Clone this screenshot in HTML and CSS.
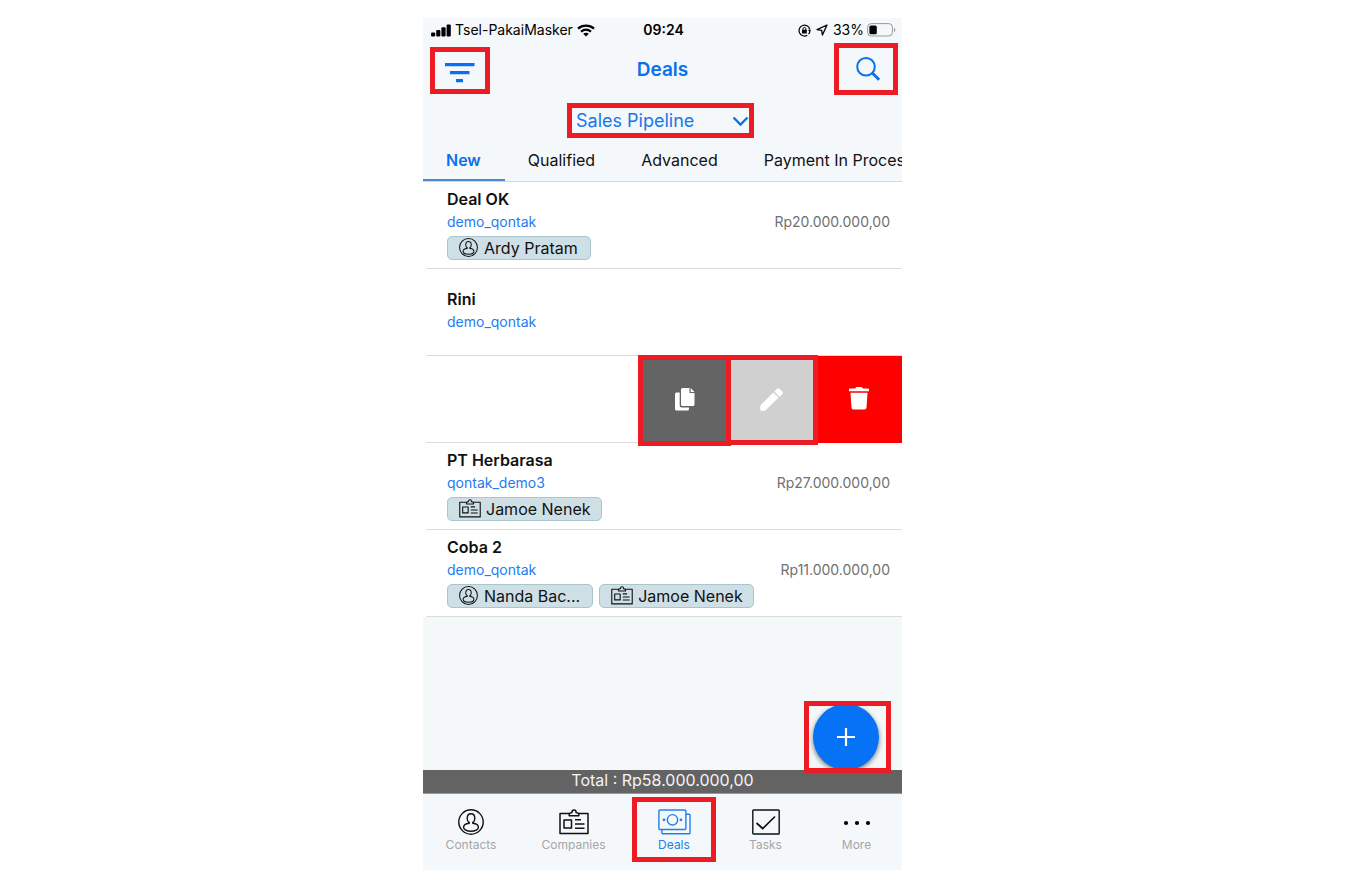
FILE: index.html
```html
<!DOCTYPE html>
<html lang="en">
<head>
<meta charset="utf-8">
<meta name="viewport" content="width=device-width, initial-scale=1">
<title>Deals</title>
<link rel="stylesheet" href="styles.css">
</head>
<body>
<svg class="defs" aria-hidden="true">
  <symbol id="person" viewBox="0 0 26 26"><g fill="none" stroke="currentColor" stroke-width="1.4"><circle cx="13" cy="13" r="12.2"/><path d="M11.200 13.600C9.900 12.800 9.200 11.300 9.200 9.400c0-2.700 1.500-4.700 3.800-4.700s3.800 2 3.800 4.700c0 1.900-.7 3.400-2 4.200"/><path d="M11.200 12.800v1.400c-3.400.4-5.600 2-5.600 4 0 2.300 3.200 4.100 7.400 4.100s7.400-1.800 7.400-4.100c0-2-2.200-3.600-5.600-4v-1.400"/></g></symbol>
  <symbol id="badge" viewBox="0 0 30 26"><g fill="none" stroke="currentColor" stroke-width="1.5" stroke-linejoin="round"><path d="M10 4.500H1V24.500h28V4.500h-9"/><path d="M10.200 6.800V4.500l2.600-.9c.1-1.500.9-2.600 2.200-2.600s2.100 1.100 2.200 2.600l2.600.9v2.300z"/><rect x="5" y="11" width="7.500" height="8"/><path d="M16 10.800h6M16 15h9.500M16 19.200h9.500"/></g></symbol>
</svg>
<div class="phone">
  <div class="status">
    <div class="status-side">
      <svg width="20" height="13" viewBox="0 0 20 13"><rect x="0" y="8.500" width="4.200" height="4" rx="1"/><rect x="5.200" y="6" width="4.200" height="6.500" rx="1"/><rect x="10.400" y="3.200" width="4.200" height="9.300" rx="1"/><rect x="15.600" y=".5" width="4.200" height="12" rx="1"/></svg>
      <span class="carrier">Tsel-PakaiMasker</span>
      <svg width="18" height="13" viewBox="0 0 18 13"><path d="M1 4.600C5.500.6 12.500.6 17 4.600M4 7.700c3-2.500 7-2.500 10 0" fill="none" stroke="#000" stroke-width="2.200"/><path d="M9 12.600 6.200 9.800c1.600-1.400 4-1.400 5.600 0z"/></svg>
    </div>
    <time class="clock">09:24</time>
    <div class="status-side status-right">
      <svg width="13" height="13" viewBox="0 0 13 13"><path d="M9.300 11.200A5.400 5.400 0 1 1 11.700 5.300M12 6.500a5.400 5.400 0 0 1-1.500 3.700" fill="none" stroke="#000" stroke-width="1.200"/><path d="M10 5.700h3l-1.500 2.200z"/><rect x="4" y="5.800" width="4.800" height="3.700" rx=".5"/><path d="M5 6V4.800a1.400 1.400 0 0 1 2.800 0V6" fill="none" stroke="#000"/></svg>
      <svg class="location" width="12" height="12" viewBox="0 0 12 12"><path d="M11 1 1 5.600l4.700.7.700 4.700z" fill="none" stroke="#000" stroke-width="1.300" stroke-linejoin="round"/></svg>
      <span>33%</span>
      <svg width="29" height="14" viewBox="0 0 29 14"><rect x=".6" y=".6" width="24.800" height="12.400" rx="3.600" fill="none" stroke="#999"/><rect x="2.400" y="2.400" width="7.400" height="8.800" rx="1.500"/><path d="M27 4.700q1.400.7 1.400 2.200T27 9.100z" fill="#999"/></svg>
    </div>
  </div>

  <header class="header">
    <button class="filter marked" aria-label="Filter"><svg width="30" height="20" viewBox="0 0 30 20"><path d="M0 1.700h29.500M5 9.700h19.500M11 17.700h7" stroke="currentColor" stroke-width="3.200"/></svg></button>
    <h1 class="title">Deals</h1>
    <button class="search marked" aria-label="Search"><svg width="26" height="26" viewBox="0 0 26 26" fill="none" stroke="currentColor"><circle cx="11" cy="10.800" r="8.800" stroke-width="2"/><path d="m17.500 17.300 6.700 6.500" stroke-width="2.900"/></svg></button>
  </header>

  <div class="pipeline">
    <div class="picker marked">
      <select class="picker-select" aria-label="Pipeline"><option>Sales Pipeline</option></select>
      <svg class="picker-arrow" width="17" height="11" viewBox="0 0 17 11"><path d="m1.500 1.500 7 7 7-7" fill="none" stroke="currentColor" stroke-width="2.400"/></svg>
    </div>
  </div>

  <nav class="stages" aria-label="Stages">
    <a class="stage stage-on" href="#new">New</a>
    <a class="stage" href="#qualified">Qualified</a>
    <a class="stage" href="#advanced">Advanced</a>
    <a class="stage" href="#payment">Payment In Process</a>
  </nav>

  <ul class="deals">
    <li class="deal">
      <h2 class="name">Deal OK</h2>
      <div class="info"><a class="owner" href="#owner">demo_qontak</a><span>Rp20.000.000,00</span></div>
      <div class="chips"><span class="chip"><svg width="19" height="19"><use href="#person"/></svg>Ardy Pratam</span></div>
    </li>
    <li class="deal">
      <h2 class="name">Rini</h2>
      <div class="info"><a class="owner" href="#owner">demo_qontak</a></div>
    </li>
    <li class="deal swiped">
      <button class="action copy marked" aria-label="Duplicate"><svg width="20" height="23" viewBox="0 0 20 23" fill="#fff"><path d="M7.500 0h7v5h5v11.500q0 1.500-1.500 1.500H7.500Q6 18 6 16.500v-15Q6 0 7.500 0zM15.700 0 19.500 3.900h-3.800z"/><path d="M4.700 4.500v13q0 2 2 2h7.300v1.500q0 1.500-1.500 1.500h-11Q0 22.500 0 21V6q0-1.500 1.500-1.500z"/></svg></button>
      <button class="action edit marked" aria-label="Edit"><svg width="23" height="23" viewBox="0 0 23 23" fill="#fff"><path d="m13.300 4.400 5.300 5.200L6.500 21.600Q5.500 22.800 4 22.800H1.200Q.2 22.800.2 21.800V19q0-1.500 1-2.500z"/><path d="m14.300 3.400 2.500-2.500q1.400-1.300 2.800 0l2.600 2.600q1.300 1.400 0 2.800l-2.500 2.400z"/></svg></button>
      <button class="action delete" aria-label="Delete"><svg width="20" height="23" viewBox="0 0 20 23" fill="#fff"><path d="M.8 1.500h5.400L7.300 0h5.400l1.100 1.500h5.400q.8 0 .8.800v2H0v-2q0-.8.800-.8zM1.500 5.800h17l-1 15q-.2 1.700-1.800 1.700H4.300q-1.600 0-1.800-1.700z"/></svg></button>
    </li>
    <li class="deal">
      <h2 class="name">PT Herbarasa</h2>
      <div class="info"><a class="owner" href="#owner">qontak_demo3</a><span>Rp27.000.000,00</span></div>
      <div class="chips"><span class="chip chip-company"><svg width="22" height="19"><use href="#badge"/></svg>Jamoe Nenek</span></div>
    </li>
    <li class="deal">
      <h2 class="name">Coba 2</h2>
      <div class="info"><a class="owner" href="#owner">demo_qontak</a><span>Rp11.000.000,00</span></div>
      <div class="chips"><span class="chip"><svg width="19" height="19"><use href="#person"/></svg>Nanda Bac...</span><span class="chip chip-company"><svg width="22" height="19"><use href="#badge"/></svg>Jamoe Nenek</span></div>
    </li>
  </ul>

  <div class="rest">
    <button class="add marked" aria-label="Add deal"><span class="add-disc"><svg width="18" height="18" viewBox="0 0 18 18"><path d="M9 0v18M0 9h18" stroke="#fff" stroke-width="2.200"/></svg></span></button>
  </div>
  <div class="total">Total : Rp58.000.000,00</div>

  <nav class="tabbar" aria-label="Main">
    <a class="tab" href="#contacts"><svg width="26" height="26"><use href="#person"/></svg><span>Contacts</span></a>
    <a class="tab" href="#companies"><svg width="30" height="26"><use href="#badge"/></svg><span>Companies</span></a>
    <a class="tab tab-on marked" href="#deals"><svg width="33" height="26" viewBox="0 0 33 26" fill="none" stroke="currentColor" stroke-width="1.400"><rect x=".9" y="1" width="27" height="19.500" rx="1"/><path d="M28 5.200h3.200q.8 0 .8.800v18q0 .8-.8.800H4.700q-.8 0-.8-.8v-3.300"/><circle cx="14.500" cy="10.800" r="5.200"/><circle cx="6" cy="10.800" r=".7" fill="currentColor"/><circle cx="23" cy="10.800" r=".7" fill="currentColor"/></svg><span>Deals</span></a>
    <a class="tab" href="#tasks"><svg width="28" height="26" viewBox="0 0 28 26" fill="none" stroke="currentColor"><rect x=".8" y="1" width="26.400" height="24" rx=".8" stroke-width="1.400"/><path d="m4.500 14 6.200 5.500L23 7.500" stroke-width="1.700"/></svg><span>Tasks</span></a>
    <a class="tab" href="#more"><svg width="28" height="26" viewBox="0 0 28 26"><circle cx="3" cy="14" r="2.100"/><circle cx="14" cy="14" r="2.100"/><circle cx="25" cy="14" r="2.100"/></svg><span>More</span></a>
  </nav>
</div>
</body>
</html>
```
FILE: styles.css
```css
* { box-sizing: border-box; }

body {
  display: flex;
  flex-direction: column;
  align-items: center;
  min-height: 100vh;
  margin: 0;
  padding: 18px 35px 19px 0;
  background: #fff;
  color: #111;
  font: 16px/20px Inter, "Liberation Sans", sans-serif;
}

h1, h2, ul { margin: 0; padding: 0; }
a { text-decoration: none; }
svg { flex: none; }
button, select { padding: 0; border: 0; background: none; color: inherit; font: inherit; }
button { display: flex; align-items: center; justify-content: center; cursor: pointer; }

.defs { position: absolute; width: 0; height: 0; }

.phone {
  display: flex;
  flex-direction: column;
  flex: 1;
  width: 100%;
  max-width: 479px;
  background: #f4f8fb;
}

/* Callout frame around highlighted controls */
.marked { border: 5px solid #ed1c24; }

.status {
  display: grid;
  grid-template-columns: 1fr auto 1fr;
  align-items: center;
  padding: 2px 6px 3px 8px;
  color: #000;
  font-size: 14px;
}
.status-side { display: flex; align-items: center; gap: 4px; }
.status-right { gap: 3px; justify-content: flex-end; }
.location { margin: 0 2px; }
.clock { font-weight: 600; }

.header {
  display: grid;
  grid-template-columns: 1fr auto 1fr;
  align-items: end;
  padding: 0 4px 0 4px;
  color: #0a70ee;
}
.filter { width: 60px; height: 47px; margin: 0 0 1px 3px; padding-top: 4px; }
.search { width: 64px; height: 52px; padding-left: 4px; justify-self: end; }
.title { align-self: center; padding-top: 1px; font-size: 19px; font-weight: 600; }

.pipeline { display: flex; justify-content: center; padding: 8px 4px 0 0; }
.picker { position: relative; width: 187px; height: 35px; color: #1a76e8; }
.picker-select { width: 100%; height: 26px; padding-left: 4px; appearance: none; font-size: 18px; line-height: 26px; }
.picker-arrow { position: absolute; top: 8px; right: 0; pointer-events: none; color: #0a70ee; }

.stages { display: flex; overflow: hidden; border-bottom: 1px solid #cfd8de; }
.stage { flex: none; padding: 12px 23px 9px; border-bottom: 2px solid transparent; color: #111; white-space: nowrap; }
.stage-on { padding-right: 24px; border-color: #4c87d4; color: #0a70ee; font-weight: 600; }

.deals { background: #fff; list-style: none; }
.deal {
  display: flex;
  flex-direction: column;
  justify-content: center;
  min-height: 87px;
  margin-left: 3px;
  padding: 0 12px 4px 21px;
  border-bottom: 1px solid #dcdcde;
}
.name { font-size: 16px; line-height: 24px; font-weight: 600; }
.info { display: flex; justify-content: space-between; line-height: 22px; color: #707070; font-size: 14px; }
.owner { color: #1f7cf0; }
.chips { display: flex; gap: 6px; padding-top: 3px; }
.chip {
  display: flex;
  align-items: center;
  gap: 6px;
  height: 24px;
  padding: 0 12px 0 11px;
  border: 1px solid #a9c6cd;
  border-radius: 5px;
  background: #cfdfe6;
}
.chip-company { gap: 5px; padding-right: 10px; }

.swiped { flex-direction: row; justify-content: flex-end; padding: 0; }
.action { position: relative; }
.copy { width: 93px; margin: -1px -5px -4px 0; padding-bottom: 2px; background: #646464; }
.edit { width: 92px; margin: -1px 0 -3px; padding: 0 2px 2px 0; background: #d0d0d0; }
.delete { width: 84px; margin-bottom: -1px; padding: 0 3px 2px 0; background: #f00; }

.rest { position: relative; flex: 1; min-height: 90px; background: #f4f8f8; }
.add { position: absolute; right: 11px; bottom: -3px; width: 87px; height: 72px; padding-right: 3px; overflow: hidden; }
.add-disc {
  display: flex;
  align-items: center;
  justify-content: center;
  flex: none;
  width: 66px;
  height: 66px;
  border-radius: 50%;
  background: #0673f6;
  box-shadow: 0 2px 5px #0008;
}

.total { padding: 0 0 3px; border-bottom: 1px solid #999; background: #636363; color: #f4f4f4; text-align: center; }

.tabbar { display: grid; grid-template-columns: 96fr 109fr 92fr 91fr 91fr; padding: 3px 0 8px; }
.tab {
  display: flex;
  flex-direction: column;
  align-items: center;
  gap: 2px;
  padding: 12px 0 9px;
  color: #111;
  font-size: 12px;
  line-height: 16px;
}
.tab span { color: #a4a6a8; }
.tab-on { justify-self: center; width: 84px; padding: 7px 0 4px; color: #2380ea; }
.tab-on span { color: inherit; }
```
